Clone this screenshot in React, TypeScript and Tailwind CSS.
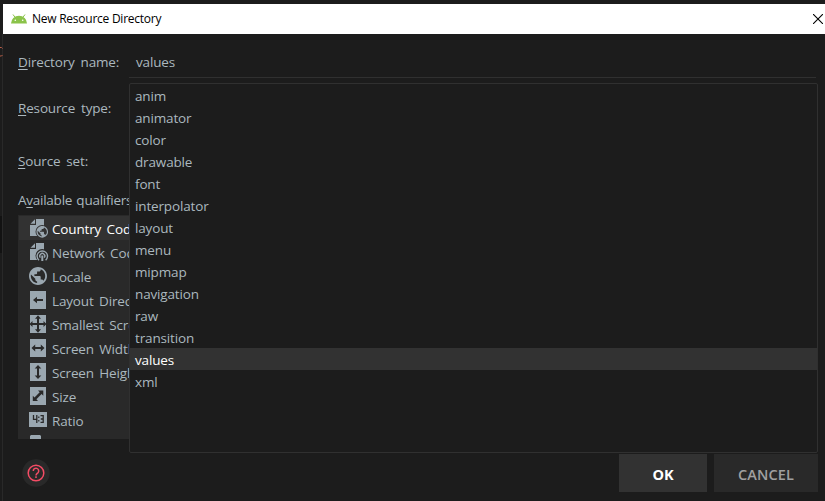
import React from "react";

const types = ["anim", "animator", "color", "drawable", "font", "interpolator", "layout", "menu", "mipmap", "navigation", "raw", "transition", "values", "xml"];

const globe = "M12 2C6.5 2 2 6.500 2 12s4.500 10 10 10 10-4.500 10-10S17.500 2 12 2zm-1 17.900c-3.900-.5-7-3.800-7-7.900 0-.6.100-1.200.2-1.800L9 15v1c0 1.100.9 2 2 2v1.900zm6.900-2.500c-.3-.8-1-1.400-1.900-1.400h-1v-3c0-.6-.4-1-1-1H8v-2h2c.6 0 1-.4 1-1V7h2c1.100 0 2-.9 2-2v-.4c2.900 1.200 5 4.100 5 7.400 0 2.100-.8 4-2.100 5.400z";

function Doc({ kind, bg }: { kind: "globe" | "antenna"; bg: string }) {
  return (
    <>
      <path d="M7 0h8v17H1V6h6z" fill="#9aa7b0" />
      <path d="M1.500 4.700L6 .2v4.500z" fill="#9aa7b0" />
      <circle cx="13.200" cy="12.800" r="6.700" fill={bg} />
      {kind === "globe" ? (
        <g transform="translate(6.300 5.900) scale(.58)"><path d={globe} fill="#9aa7b0" /></g>
      ) : (
        <g fill="none" stroke="#9aa7b0" strokeWidth="1.400">
          <path d="M10 17.200a5.200 5.200 0 1 1 6.600 0M11.400 14.600a2.500 2.500 0 1 1 3.800 0" />
          <path d="M13.300 12.500v5.500" strokeWidth="2" />
        </g>
      )}
    </>
  );
}

const Square = () => <path d="M1 0h16v18H1z" fill="#9aa7b0" />;

const icons: React.ReactNode[] = [
  <Doc kind="globe" bg="#323232" />,
  <Doc kind="antenna" bg="#292929" />,
  <g transform="translate(-1.800 -1.800) scale(.9)"><path d={globe} fill="#9aa7b0" /></g>,
  <><Square /><path d="M4 9l4-3.300V8h6v2H8v2.300z" fill="#292929" /></>,
  <><Square /><path d="M9 .3l3 3.500h-2V8h4.500V6l3 3-3 3v-2H10v4.200h2L9 17.700l-3-3.500h2V10H3.500v2l-3-3 3-3v2H8V3.800H6z" fill="#292929" /></>,
  <><Square /><path d="M2.500 9L6.200 5.500V8h5.600V5.500L15.500 9l-3.700 3.500V10H6.200v2.500z" fill="#292929" /></>,
  <><Square /><path d="M9 2l3.300 3.600H10v6.800h2.300L9 16l-3.300-3.600H8V5.600H5.700z" fill="#292929" /></>,
  <><Square /><path d="M14.300 3.500v5.200l-1.700-1.700-5.200 5.300L9 14H3.800V8.800l1.700 1.700 5.200-5.300L9 3.500z" fill="#292929" /></>,
  <>
    <path d="M0 1h18v15H0z" fill="#9aa7b0" />
    <path d="M4.500 4v4.300H8M7.800 4v8M11.500 4.700h2.700v6.600h-2.700M11.800 8h2.400" fill="none" stroke="#292929" strokeWidth="1.300" />
    <path d="M9.200 5.500h1.200V7H9.200zM9.200 9h1.200v1.500H9.200z" fill="#292929" />
  </>,
  <path d="M2 0h9l1 1v10H1V1z" fill="#9aa7b0" />,
];

const qualifiers = ["Country Code", "Network Code", "Locale", "Layout Direction", "Smallest Screen Width", "Screen Width", "Screen Height", "Size", "Ratio", ""];

function Label({ before = "", hot, after }: { before?: string; hot: string; after: string }) {
  return (
    <span className="w-[111px] shrink-0 whitespace-nowrap">
      {before}<span className="underline decoration-1 underline-offset-[2px] [text-decoration-skip-ink:none]">{hot}</span>{after}
    </span>
  );
}

export default function App() {
  return (
    <div className="relative flex h-[501px] w-[825px] flex-col overflow-hidden bg-[#1c1c1c] pt-1 font-['Open_Sans','Noto_Sans',sans-serif] text-[13.5px] leading-[20px] tracking-[-0.15px] [word-spacing:2.5px] text-[#abb8bf]">
      <div className="absolute left-0 top-[34px] h-[467px] w-[3px] border-r border-[#292929]" />
      <div className="absolute left-0 top-[216px] h-[37px] w-[2px] bg-[#121212]" />
      <svg className="absolute left-0 top-[46px] h-3 w-[3px]" viewBox="0 0 3 12"><path d="M0 1.500h1.500l1 1M0 10h1.500l1-1" fill="none" stroke="#b95f48" /></svg>

      <header className="ml-[3px] flex h-[30px] shrink-0 items-center bg-white pl-2 text-black">
        <svg className="mr-[5px] h-[10px] w-4" viewBox="0 0 16 10">
          <path d="M0 9.500A8 7.700 0 0 1 16 9.500z" fill="#8bc34a" />
          <path d="M2 .5l2.200 3M14 .5l-2.200 3" stroke="#8bc34a" strokeWidth="1" />
          <circle cx="4.300" cy="6.300" r=".8" fill="#fff" /><circle cx="11.700" cy="6.300" r=".8" fill="#fff" />
        </svg>
        <span className="text-[12px] leading-[18px] tracking-[-0.25px] [word-spacing:0px]">New Resource Directory</span>
        <svg className="ml-auto mr-[2px] h-[10px] w-[10px]" viewBox="0 0 10 10"><path d="M0 0l10 10M10 0L0 10" stroke="#000" strokeWidth="1.100" /></svg>
      </header>

      <main className="ml-[3px] flex grow flex-col pl-[15px]">
        <div className="flex h-[44px] items-center pt-3">
          <Label hot="D" after="irectory name:" />
          <div className="mr-[9px] flex h-[32px] grow items-center border-b border-[#303030] pl-[7px]">values</div>
        </div>
        <div className="mt-[20px] h-[20px]"><Label hot="R" after="esource type:" /></div>
        <div className="mt-[33px] h-[20px]"><Label hot="S" after="ource set:" /></div>
        <div className="mt-[19px] h-[20px] tracking-[-0.25px] [word-spacing:1px]"><Label before="A" hot="v" after="ailable qualifiers:" /></div>
        <div className="mt-[5px] h-[224px] w-[111px] overflow-hidden bg-[#292929] pt-px">
          {qualifiers.map((q, i) => (
            <div key={i} className={`flex h-6 items-center whitespace-nowrap ${i === 0 ? "ml-px bg-[#323232] pl-[10px] text-white" : "pl-[11px]"}`}>
              <svg className="mr-[5px] h-[18px] w-[18px] shrink-0 overflow-visible" viewBox="0 0 18 18">{icons[i]}</svg>
              <span className="pt-[2px] [word-spacing:2px]">{q}</span>
            </div>
          ))}
        </div>
        <footer className="flex grow items-start pt-[15px]">
          <svg className="ml-1 mt-[5px] h-7 w-7" viewBox="0 0 28 28">
            <circle cx="14" cy="14" r="13.700" fill="#292929" />
            <circle cx="14" cy="14" r="7.800" fill="none" stroke="#f44c65" strokeWidth="1.500" />
            <path d="M11.300 12a2.700 2.700 0 1 1 4.700 1.700c-1 .9-2 1.400-2 2.800M14 17.300V19" fill="none" stroke="#f44c65" strokeWidth="1.500" />
          </svg>
          <div className="ml-auto mr-[7px] flex gap-[7px] text-[14.5px] font-bold tracking-[-0.1px]">
            <button className="h-[38px] w-[88px] bg-[#323232] pt-[3px] text-white">OK</button>
            <button className="h-[38px] w-[104px] bg-[#292929] pt-[3px] text-[#a0a0a0]"><span className="font-semibold tracking-[0.1px]">CANCEL</span></button>
          </div>
        </footer>
      </main>

      <div className="absolute left-[129px] top-[83px] h-[370px] w-[689px] rounded-[2px] border border-[#303030] bg-[#1c1c1c]">
        {types.map((t) => (
          <div key={t} className={`flex h-[22px] items-center pl-[5px] pt-[2px] ${t === "values" ? "bg-[#323232] text-white" : ""}`}>{t}</div>
        ))}
      </div>
    </div>
  );
}
